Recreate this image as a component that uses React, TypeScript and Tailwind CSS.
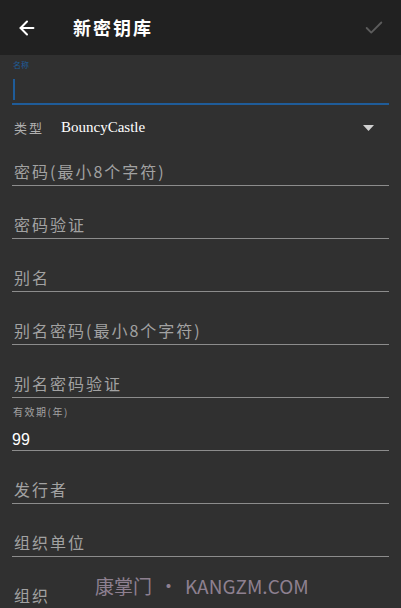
import { ArrowLeft, Check } from "lucide-react"

const cjk = "font-['Noto_Sans_CJK_SC','Noto_Sans',sans-serif]"

function Field({ hint }: { hint: string }) {
  return (
    <div className="mx-3 h-[53px] flex items-end border-b border-[#8c8c8c]">
      <span className="pb-[4px] pl-[2px] text-[16px] leading-[20px] tracking-[2px] text-[#a2a2a2]">{hint}</span>
    </div>
  )
}

export default function App() {
  return (
    <div className={`relative w-[401px] h-[608px] overflow-hidden bg-[#303030] ${cjk}`}>
      {/* Header */}
      <div className="h-[55px] bg-[#212121] flex items-center px-4">
        <ArrowLeft className="h-[22px] w-[22px] text-white" strokeWidth={2.2} />
        <h1 className="ml-[35px] text-[18px] font-bold text-white tracking-[2px]">新密钥库</h1>
        <Check className="ml-auto h-[22px] w-[22px] text-[#5c5c5c]" strokeWidth={2} />
      </div>

      {/* 名称 */}
      <div className="mx-3 h-[50px] relative border-b-2 border-[#1f5c99]">
        <span className="absolute left-[1px] top-[5px] text-[8px] leading-[10px] text-[#1f5c99]">名称</span>
        <div className="absolute left-[1px] top-[24px] w-[2px] h-[21px] bg-[#1f5c99]"></div>
      </div>

      {/* 类型 */}
      <div className="h-[45px] flex items-center px-[14px]">
        <span className="text-[13px] text-[#b0b0b0] tracking-[2px]">类型</span>
        <span className="ml-[17px] text-[15px] text-white font-['Liberation_Serif',serif]">BouncyCastle</span>
        <svg className="ml-auto mr-[13px]" width="11" height="6" viewBox="0 0 11 6">
          <path d="M0 0h11L5.5 6z" fill="#d0d0d0" />
        </svg>
      </div>

      <div className="mx-3 h-[36px] flex items-end border-b border-[#8c8c8c]">
        <span className="pb-[4px] pl-[2px] text-[16px] leading-[20px] tracking-[2px] text-[#a2a2a2]">密码(最小8个字符)</span>
      </div>
      <Field hint="密码验证" />
      <Field hint="别名" />
      <Field hint="别名密码(最小8个字符)" />
      <Field hint="别名密码验证" />

      {/* 有效期 */}
      <div className="mx-3 h-[53px] flex flex-col border-b border-[#8c8c8c]">
        <span className="mt-[8px] pl-[1px] text-[10px] leading-[12px] tracking-[1.5px] text-[#a2a2a2]">有效期(年)</span>
        <span className="mt-[12px] text-[16px] leading-[20px] text-white font-['Liberation_Sans',sans-serif]">99</span>
      </div>
      <Field hint="发行者" />
      <Field hint="组织单位" />
      <Field hint="组织" />

      {/* watermark */}
      <div className="absolute left-[95px] top-[573px] flex items-center text-[19px] leading-[26px] text-[#8e8090] whitespace-nowrap">
        <span>康掌门</span>
        <span className="mx-[7px]">•</span>
        <span>KANGZM.COM</span>
      </div>
    </div>
  )
}
